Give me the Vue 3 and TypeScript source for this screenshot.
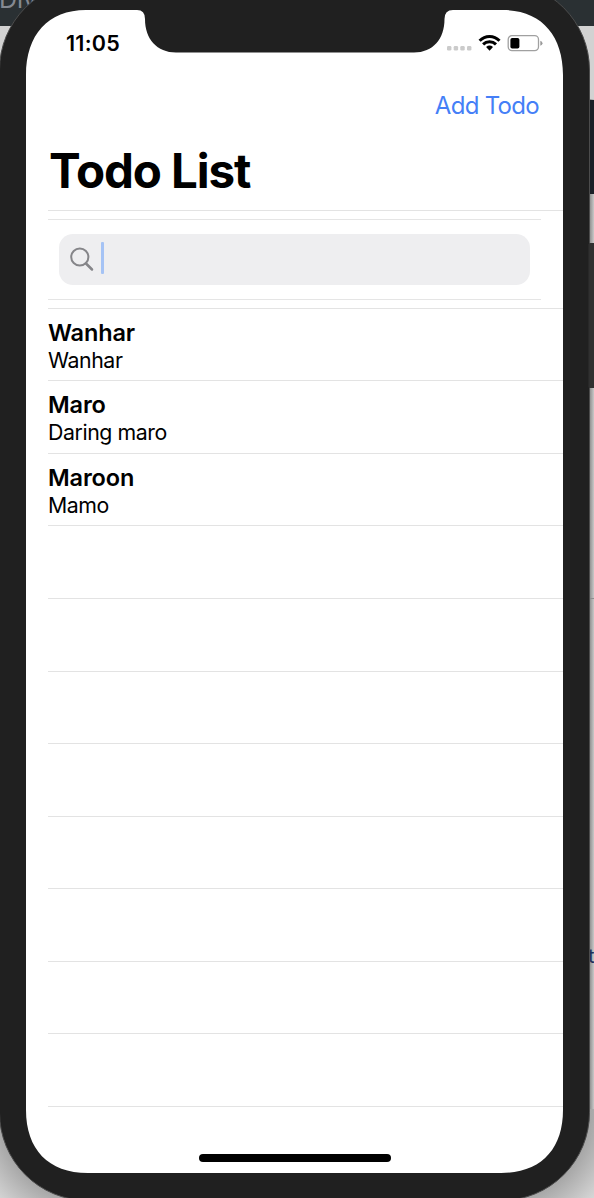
<script setup lang="ts">
import { ref } from 'vue'

interface Todo {
  title: string
  note: string
}

const query = ref<string>('')
const todos = ref<Todo[]>([
  { title: 'Wanhar', note: 'Wanhar' },
  { title: 'Maro', note: 'Daring maro' },
  { title: 'Maroon', note: 'Mamo' },
])
const emptyRows = 8
</script>

<template>
  <div class="scene">
    <!-- desktop behind the device, and the device shell -->
    <svg class="backdrop" width="594" height="1198" viewBox="0 0 594 1198" aria-hidden="true">
      <defs>
        <linearGradient id="edge" x1="0" x2="1" y1="0" y2="0">
          <stop offset="0" stop-color="#858585" />
          <stop offset="1" stop-color="#c9c9c9" />
        </linearGradient>
        <radialGradient id="shadowLeft" gradientUnits="userSpaceOnUse" cx="88" cy="1112" r="150">
          <stop offset="0.58" stop-color="#a5a5a5" />
          <stop offset="0.85" stop-color="#d9d9d9" />
          <stop offset="1" stop-color="#e4e4e4" />
        </radialGradient>
        <radialGradient id="shadowRight" gradientUnits="userSpaceOnUse" cx="502" cy="1112" r="150">
          <stop offset="0.58" stop-color="#a5a5a5" />
          <stop offset="0.85" stop-color="#d9d9d9" />
          <stop offset="1" stop-color="#e4e4e4" />
        </radialGradient>
      </defs>
      <rect width="594" height="1198" fill="#d2d2d2" />
      <rect width="594" height="26" fill="#2a3033" />
      <text x="-1" y="8" class="behind">Div</text>
      <rect x="589" y="99" width="5" height="1010" fill="url(#edge)" />
      <rect x="590" y="100" width="4" height="94" fill="#1b2028" />
      <rect x="589" y="598" width="5" height="1" fill="#8f8f8f" />
      <text x="588" y="963" class="behind link">t</text>
      <rect x="0" y="1100" width="90" height="98" fill="url(#shadowLeft)" />
      <rect x="500" y="1109" width="94" height="89" fill="url(#shadowRight)" />
      <rect x="-0.5" y="-18" width="590" height="1218.5" rx="88" fill="#202020" stroke="#4c4c4c" />
      <rect x="588.5" y="243" width="8" height="145" rx="1.500" fill="#303030" />
      <path
        fill="#fff"
        d="M86 10 H137 Q145 10 145 19 C145 39 157 52.5 176 52.5 H414 C433 52.5 444.5 39 444.500 19 Q444.500 10 453 10 H503
           C541 10 563 35 563 75 V1110 C563 1149 541 1173 501 1173 H88 C48 1173 26 1149 26 1110 V75 C26 35 48 10 86 10 Z"
      />
    </svg>

    <main class="screen">
      <header class="status">
        <span class="time">11:05</span>
        <svg class="indicators" width="98" height="20" viewBox="0 0 98 20" aria-hidden="true">
          <g fill="#cbcbcb">
            <rect x="2" y="12" width="4.400" height="4.600" rx="1.300" />
            <rect x="8.700" y="12" width="4.400" height="4.600" rx="1.300" />
            <rect x="15.300" y="12" width="4.400" height="4.600" rx="1.300" />
            <rect x="22" y="12" width="4.400" height="4.600" rx="1.300" />
          </g>
          <g fill="none" stroke="#000" stroke-width="3">
            <path d="M34.600 6.700 C40.200 1 48.900 1 54.500 6.700" />
            <path d="M38.100 10.300 C41.600 6.900 47.500 6.900 51 10.300" />
          </g>
          <path d="M41.100 13 Q44.550 10.200 48 13 L44.550 16.700 Z" />
          <rect x="63.200" y="1.700" width="30.300" height="14.900" rx="3.800" fill="none" stroke="#a0a0a0" stroke-width="1.300" />
          <rect x="65.400" y="4" width="9" height="10.500" rx="1.800" />
          <path d="M95.300 6.700 Q97.500 7.500 97.500 9.200 Q97.500 10.900 95.300 11.700 Z" fill="#999" />
        </svg>
      </header>

      <nav class="toolbar">
        <button class="add" type="button">Add Todo</button>
      </nav>
      <h1 class="heading">Todo List</h1>

      <section class="search-row">
        <label class="search">
          <svg width="24" height="25" viewBox="0 0 24 25" fill="none" stroke="#858589" aria-hidden="true">
            <circle cx="9.800" cy="10" r="8.600" stroke-width="2" />
            <path d="M16 16.500 L22 22.500" stroke-width="2.500" stroke-linecap="round" />
          </svg>
          <span class="caret"></span>
          <input v-model="query" class="field" type="text" aria-label="Search" />
        </label>
      </section>

      <ul class="list">
        <li v-for="todo in todos" :key="todo.title" class="row">
          <strong class="title">{{ todo.title }}</strong>
          <span class="note">{{ todo.note }}</span>
        </li>
        <li v-for="n in emptyRows" :key="n" class="row"></li>
      </ul>

      <footer class="home"><span class="bar"></span></footer>
    </main>
  </div>
</template>

<style>
body {
  margin: 0;
  overflow: hidden;
}
</style>

<style scoped>
.scene {
  position: relative;
  width: 594px;
  height: 1198px;
  overflow: hidden;
  font-family: Inter, "Liberation Sans", sans-serif;
  color: #000;
}
.backdrop {
  position: absolute;
  inset: 0;
}
.behind {
  font: 25px Inter, sans-serif;
  fill: #858991;
}
.link {
  font-size: 20px;
  fill: #1e2e58;
}
.screen {
  position: relative;
  box-sizing: border-box;
  display: flex;
  flex-direction: column;
  width: 537px;
  height: 1163px;
  margin-left: 26px;
  top: 10px;
}
.status {
  display: flex;
  justify-content: space-between;
  align-items: flex-start;
  height: 70px;
  padding: 20px 20px 0 40px;
  box-sizing: border-box;
}
.time {
  font-size: 21.5px;
  font-weight: 600;
  line-height: 27px;
  letter-spacing: 0.25px;
}
.indicators {
  margin-top: 4px;
}
.toolbar {
  display: flex;
  justify-content: flex-end;
  box-sizing: border-box;
  height: 50px;
  padding: 11px 24px 0 0;
}
.add {
  height: 30px;
  padding: 0;
  border: 0;
  background: none;
  font: 24px/30px Inter, sans-serif;
  letter-spacing: -0.7px;
  color: #457ff7;
  white-space: nowrap;
}
.heading {
  height: 80px;
  margin: 0 0 0 22px;
  padding-left: 1px;
  border-bottom: 1px solid #e3e3e3;
  font-size: 47.5px;
  font-weight: 700;
  line-height: 82px;
  letter-spacing: -1.1px;
}
.search-row {
  box-sizing: border-box;
  height: 81px;
  margin: 8px 22px 0;
  padding: 14px 11px;
  border-top: 1px solid #e5e5e5;
  border-bottom: 1px solid #e5e5e5;
}
.search {
  display: flex;
  align-items: center;
  height: 51px;
  padding-left: 11px;
  border-radius: 14px;
  background: #eeeef0;
}
.caret {
  width: 3px;
  height: 32px;
  margin-left: 7px;
  margin-top: -3px;
  border-radius: 1px;
  background: #a5c3f5;
}
.field {
  flex: 1;
  min-width: 0;
  border: 0;
  outline: 0;
  background: transparent;
  font: 23px Inter, sans-serif;
}
.list {
  margin: 7.75px 0 0 22px;
  padding: 0;
  list-style: none;
  border-top: 1px solid #e3e3e3;
}
.row {
  box-sizing: border-box;
  display: flex;
  flex-direction: column;
  height: 72.57px;
  padding-top: 9.8px;
  border-bottom: 1px solid #e3e3e3;
}
.title {
  font-size: 23.5px;
  font-weight: 600;
  line-height: 28px;
  letter-spacing: -0.12px;
}
.note {
  font-size: 21.3px;
  line-height: 26.4px;
  letter-spacing: -0.42px;
}
.home {
  display: flex;
  justify-content: center;
  margin-top: auto;
  padding-bottom: 11px;
}
.bar {
  width: 192px;
  height: 8px;
  border-radius: 4px;
  background: #000;
}
</style>
